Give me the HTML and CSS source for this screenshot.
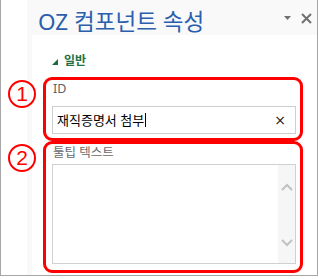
FILE: index.html
```html
<!DOCTYPE html>
<html lang="ko">
<head>
<meta charset="utf-8">
<link rel="stylesheet" href="styles.css">
</head>
<body>
<div class="frame">
  <div class="gutter"></div>
  <div class="panel">
    <div class="header">
      <div class="title">OZ 컴포넌트 속성</div>
      <div class="tools">
        <svg class="drop" width="8" height="5" viewBox="0 0 8 5"><path d="M0 0H7L3.5 4Z" fill="#707070"/></svg>
        <svg class="close" width="11" height="11" viewBox="0 0 11 11"><path d="M1 1L10 10M10 1L1 10" stroke="#707070" stroke-width="2"/></svg>
      </div>
    </div>
    <div class="body">
      <div class="section">
        <svg class="caret" width="6" height="6" viewBox="0 0 6 6"><path d="M6 0V6H0Z" fill="#1f6b3f"/></svg>
        <span class="section-name">일반</span>
      </div>
      <div class="group g1">
        <div class="badge">1</div>
        <div class="label">ID</div>
        <div class="input">
          <span class="value">재직증명서 첨부</span><span class="caret-line"></span>
          <span class="clear">×</span>
        </div>
      </div>
      <div class="group g2">
        <div class="badge">2</div>
        <div class="label">툴팁 텍스트</div>
        <div class="textarea">
          <div class="scroll">
            <svg width="12" height="8" viewBox="0 0 12 8"><path d="M1 7L6 2L11 7" fill="none" stroke="#c2c2c2" stroke-width="2"/></svg>
            <svg width="12" height="8" viewBox="0 0 12 8"><path d="M1 1L6 6L11 1" fill="none" stroke="#c2c2c2" stroke-width="2"/></svg>
          </div>
        </div>
      </div>
    </div>
  </div>
</div>
</body>
</html>
```

FILE: styles.css
```css
html, body {
  margin: 0;
  padding: 0;
  background: #ffffff;
}
body {
  width: 319px;
  height: 279px;
  font-family: "Noto Sans", "Noto Sans CJK KR", sans-serif;
}
.frame {
  box-sizing: border-box;
  width: 318px;
  height: 276px;
  border-left: 1px solid #a6a6a6;
  border-right: 1px solid #a6a6a6;
  border-bottom: 1px solid #a6a6a6;
  display: flex;
}
.gutter {
  width: 26px;
  flex: none;
}
.panel {
  flex: 1;
  background: #f9f9f9;
  display: flex;
  flex-direction: column;
}
.header {
  height: 35px;
  flex: none;
  display: flex;
  align-items: flex-start;
  box-sizing: border-box;
  padding: 9px 5px 0 11px;
}
.title {
  font-size: 22.5px;
  line-height: 26px;
  color: #2b5fae;
  flex: 1;
  white-space: nowrap;
}
.tools {
  display: flex;
  align-items: center;
  gap: 9px;
  padding-top: 4px;
}
.tools .drop {
  display: block;
}
.tools .close {
  display: block;
}
.body {
  flex: 1;
  margin-left: 5px;
  background: #ffffff;
  display: flex;
  flex-direction: column;
  padding-left: 11px;
}
.section {
  display: flex;
  align-items: center;
  height: 16px;
  margin: 18px 0 8px 9px;
  gap: 6px;
}
.caret {
  display: block;
  margin-top: 2px;
}
.section-name {
  font-size: 12px;
  line-height: 16px;
  font-weight: bold;
  color: #1e7145;
}
.group {
  position: relative;
  box-sizing: border-box;
  width: 260px;
  border: 3px solid #ff0000;
  border-radius: 9px;
  padding: 1px 4px 0 6px;
}
.g1 {
  height: 64px;
}
.g2 {
  height: 132px;
}
.badge {
  position: absolute;
  left: -38px;
  top: 0px;
  box-sizing: border-box;
  width: 28px;
  height: 28px;
  border: 2px solid #ff0000;
  border-radius: 50%;
  color: #ff0000;
  font-family: "Liberation Sans", sans-serif;
  font-size: 21px;
  line-height: 24px;
  text-align: center;
}
.label {
  font-size: 12.5px;
  line-height: 16px;
  color: #5f5f5f;
  padding-left: 1px;
}
.g1 .label {
  margin-bottom: 9px;
}
.g2 .label {
  margin-bottom: 3px;
  color: #6a6a6a;
}
.input {
  box-sizing: border-box;
  width: 244px;
  height: 28px;
  border: 1px solid #cfcfcf;
  display: flex;
  align-items: center;
  padding: 0 9px 0 4px;
  font-size: 13px;
  color: #000000;
}
.value {
  line-height: 16px;
}
.caret-line {
  width: 1px;
  height: 14px;
  background: #000000;
  margin-left: 1px;
}
.clear {
  margin-left: auto;
  font-family: "DejaVu Sans", sans-serif;
  font-size: 14px;
  line-height: 16px;
  color: #222222;
}
.textarea {
  box-sizing: border-box;
  width: 244px;
  height: 100px;
  border: 1px solid #d0d0d0;
  display: flex;
  justify-content: flex-end;
}
.scroll {
  width: 17px;
  background: #f6f6f6;
  display: flex;
  flex-direction: column;
  align-items: center;
  justify-content: space-between;
  padding: 18px 0 16px;
}
.scroll svg {
  display: block;
}
```
